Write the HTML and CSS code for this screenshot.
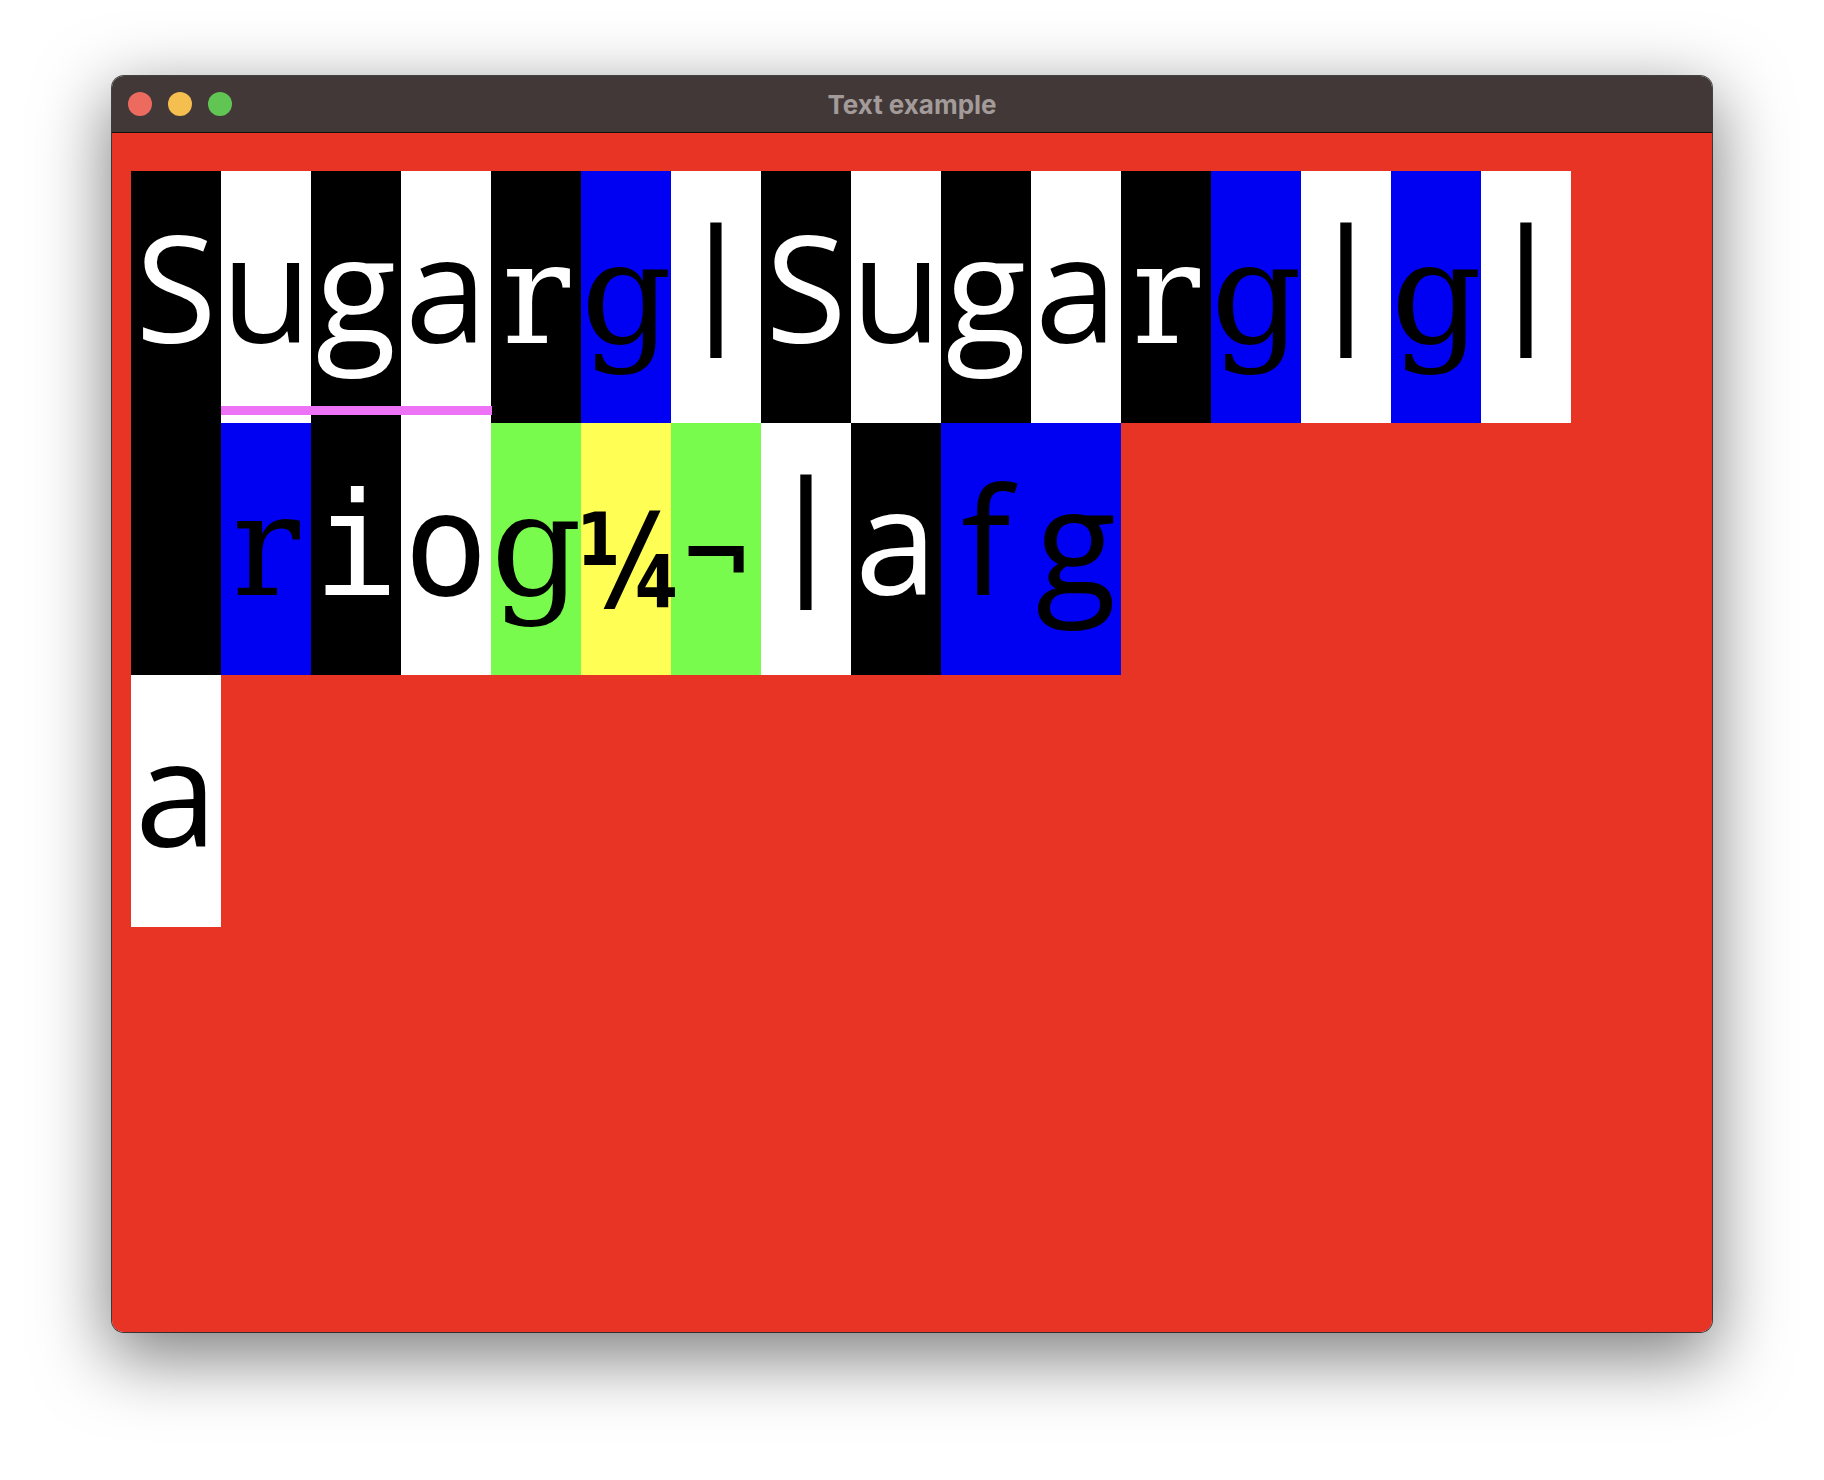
FILE: index.html
```html
<!DOCTYPE html>
<html lang="en">
<head>
<meta charset="utf-8">
<title>Text example</title>
<link rel="stylesheet" href="styles.css">
</head>
<body>
<div class="window">
  <div class="titlebar">
    <div class="lights">
      <span class="light red"></span>
      <span class="light yellow"></span>
      <span class="light green"></span>
    </div>
    <div class="title">Text example</div>
    <div></div>
  </div>
  <div class="content">
    <div class="grid">
      <div class="cell k tall">S</div>
      <div class="cell w">u</div>
      <div class="cell k">g</div>
      <div class="cell w">a</div>
      <div class="cell k"><span class="slab">r</span></div>
      <div class="cell b"><span class="slab">g</span></div>
      <div class="cell w"><span class="bar">|</span></div>
      <div class="cell k">S</div>
      <div class="cell w">u</div>
      <div class="cell k">g</div>
      <div class="cell w">a</div>
      <div class="cell k"><span class="slab">r</span></div>
      <div class="cell b"><span class="slab">g</span></div>
      <div class="cell w"><span class="bar">|</span></div>
      <div class="cell b"><span class="slab">g</span></div>
      <div class="cell w"><span class="bar">|</span></div>

      <div class="cell b"><span class="slab">r</span></div>
      <div class="cell k"><span class="mono">i</span></div>
      <div class="cell w"><span class="mono">o</span></div>
      <div class="cell gr"><span class="slab">g</span></div>
      <div class="cell y"><span class="frac">¼</span></div>
      <div class="cell gr"><span class="not">¬</span></div>
      <div class="cell w"><span class="bar">|</span></div>
      <div class="cell k">a</div>
      <div class="cell b wide"><span class="half">f</span><span class="half">g</span></div>

      <div class="cell w row3">a</div>

      <div class="underline"></div>
    </div>
  </div>
</div>
</body>
</html>
```
FILE: styles.css
```css
html, body {
  margin: 0;
  background: #ffffff;
}

body {
  padding: 76px 112px 148px;
}

.window {
  width: 1600px;
  height: 1256px;
  border-radius: 12px;
  overflow: hidden;
  display: flex;
  flex-direction: column;
  box-shadow: 0 0 0 1px rgba(0, 0, 0, 0.7), 0 22px 70px 4px rgba(0, 0, 0, 0.5);
}

.titlebar {
  flex: none;
  height: 56px;
  background: #413837;
  border-bottom: 1px solid #141010;
  display: grid;
  grid-template-columns: 1fr auto 1fr;
  align-items: center;
}

.lights {
  display: flex;
  gap: 16px;
  padding-left: 16px;
}

.light {
  width: 24px;
  height: 24px;
  border-radius: 50%;
}

.red { background: #ec6a5e; }
.yellow { background: #f4bf4f; }
.green { background: #61c554; }

.title {
  font-family: "Inter", "Roboto", sans-serif;
  font-weight: 700;
  font-size: 26px;
  color: #a39b9a;
}

.content {
  flex: 1;
  background: #e83425;
  padding: 38px 0 0 19px;
}

.grid {
  position: relative;
  display: grid;
  grid-template-columns: repeat(16, 90px);
  grid-template-rows: repeat(3, 252px);
}

.cell {
  font-family: "Open Sans", sans-serif;
  font-size: 148px;
  line-height: 229px;
  text-align: center;
  white-space: nowrap;
}

.tall { grid-row: span 2; }
.wide { grid-column: span 2; display: flex; }
.row3 { grid-row: 3; grid-column: 1; }

.half {
  width: 90px;
  text-align: center;
}

.k { background: #000000; color: #ffffff; }
.w { background: #ffffff; color: #000000; }
.b { background: #0000f2; color: #000000; }
.gr { background: #78fb4c; color: #000000; }
.y { background: #fffe54; color: #000000; }

.slab {
  font-family: "DejaVu Serif", serif;
  font-size: 142px;
  line-height: 0;
}

.mono {
  font-family: "DejaVu Sans Mono", monospace;
  font-size: 142px;
  line-height: 0;
}

.bar {
  font-family: "DejaVu Sans", sans-serif;
  font-size: 136px;
  line-height: 0;
  vertical-align: 17px;
}

.frac {
  font-family: "DejaVu Sans", sans-serif;
  font-weight: 700;
  font-size: 96px;
  line-height: 0;
  display: inline-block;
  transform: scale(1.05, 1.35);
  transform-origin: 50% 100%;
}

.not {
  font-family: "DejaVu Sans", sans-serif;
  font-weight: 700;
  font-size: 88px;
  line-height: 0;
  vertical-align: 10px;
}

.underline {
  position: absolute;
  grid-column: 2 / 5;
  grid-row: 1 / 2;
  left: 0;
  right: -1px;
  bottom: 8px;
  height: 9px;
  background: #ee72f5;
}
```
